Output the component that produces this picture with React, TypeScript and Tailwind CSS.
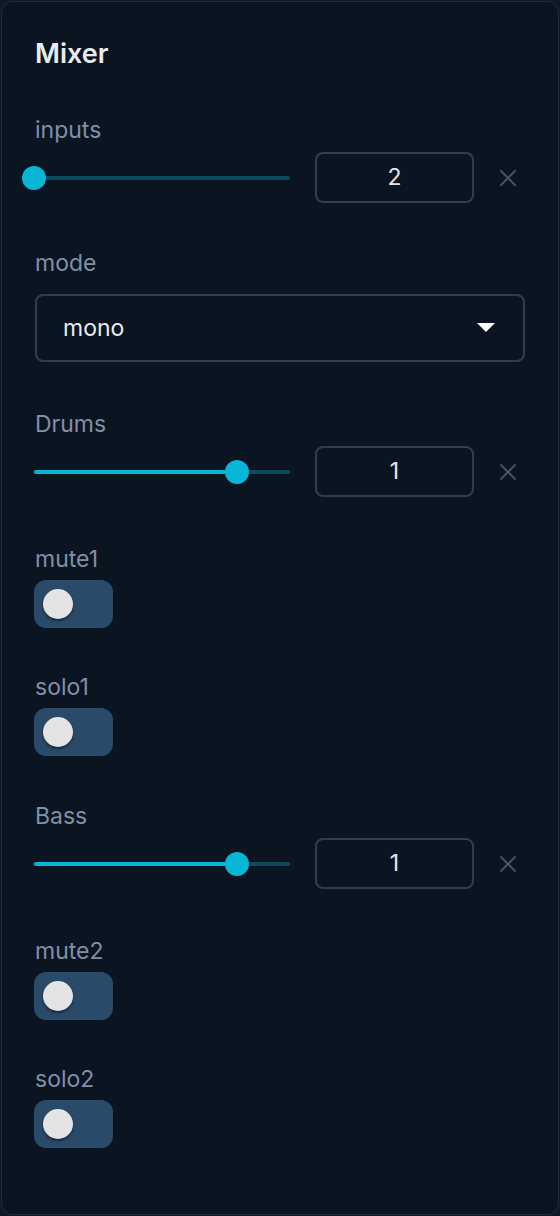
import React from "react";

const font = { fontFamily: "Inter, 'Noto Sans', sans-serif" };

function Label({ children }: { children: React.ReactNode }) {
  return <div className="text-[23px] leading-[28px] text-[#8090a5]">{children}</div>;
}

function XIcon() {
  return (
    <svg width="18" height="18" viewBox="0 0 18 18" className="shrink-0">
      <path d="M2 2 L16 16 M16 2 L2 16" stroke="#4a525d" strokeWidth="2" strokeLinecap="round" />
    </svg>
  );
}

function SliderRow({ pct, value }: { pct: number; value: string }) {
  return (
    <div className="mt-[8px] flex items-center">
      <div className="relative -ml-[1px] h-[4px] w-[256px] rounded-full bg-[#0c4a5e]">
        <div className="absolute left-0 top-0 h-[4px] rounded-full bg-[#06b6d4]" style={{ width: `${pct}%` }} />
        <div
          className="absolute top-1/2 h-[24px] w-[24px] -translate-x-1/2 -translate-y-1/2 rounded-full bg-[#06b6d4]"
          style={{ left: `${pct}%` }}
        />
      </div>
      <div className="ml-[25px] flex h-[51px] w-[159px] items-center justify-center rounded-lg border-2 border-[#363d48] text-[23px] text-[#e5e7eb]">
        {value}
      </div>
      <div className="ml-[25px] flex items-center">
        <XIcon />
      </div>
    </div>
  );
}

function Toggle() {
  return (
    <div className="-ml-[1px] mt-[7px] flex h-[48px] w-[79px] items-center rounded-[12px] bg-[#2a4a6a] px-[9px]">
      <div className="h-[30px] w-[30px] rounded-full bg-[#e3e3e3] shadow-[0_2px_3px_rgba(0,0,0,0.45)]" />
    </div>
  );
}

export default function App() {
  return (
    <div className="min-h-[1216px] bg-[#0f1a2a] p-[1px]" style={font}>
      <div className="flex flex-col rounded-[12px] border border-[#1e2a3a] bg-[#0b1421] pb-[66px] pl-[33px] pr-[33px] pt-[36px]">
        <div className="text-[27px] font-semibold leading-[32px] text-[#e8ecf1]">Mixer</div>

        <div className="mt-[46px] flex flex-col">
          <Label>inputs</Label>
          <SliderRow pct={0} value="2" />
        </div>

        <div className="mt-[46px] flex flex-col">
          <Label>mode</Label>
          <div className="mt-[17px] flex h-[68px] items-center justify-between rounded-lg border-2 border-[#363d48] pl-[26px] pr-[28px] text-[23px] text-[#e8ecf1]">
            <span>mono</span>
            <svg width="18" height="10" viewBox="0 0 18 10">
              <path d="M0 0 L18 0 L9 9 Z" fill="#ffffff" />
            </svg>
          </div>
        </div>

        <div className="mt-[48px] flex flex-col">
          <Label>Drums</Label>
          <SliderRow pct={79.3} value="1" />
        </div>

        <div className="mt-[48px] flex flex-col">
          <Label>mute1</Label>
          <Toggle />
        </div>

        <div className="mt-[45px] flex flex-col">
          <Label>solo1</Label>
          <Toggle />
        </div>

        <div className="mt-[46px] flex flex-col">
          <Label>Bass</Label>
          <SliderRow pct={79.3} value="1" />
        </div>

        <div className="mt-[48px] flex flex-col">
          <Label>mute2</Label>
          <Toggle />
        </div>

        <div className="mt-[45px] flex flex-col">
          <Label>solo2</Label>
          <Toggle />
        </div>
      </div>
    </div>
  );
}
